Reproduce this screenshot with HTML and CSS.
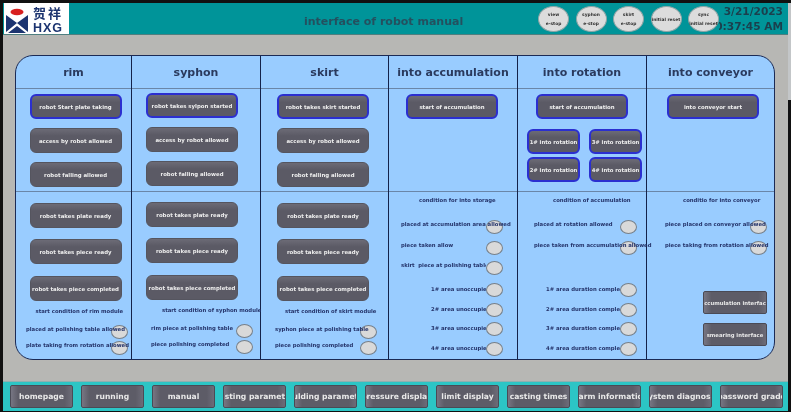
FILE: index.html
```html
<!DOCTYPE html>
<html lang="en">
<head>
<meta charset="utf-8">
<title>interface of robot manual</title>
<link rel="stylesheet" href="styles.css">
</head>
<body>
<div class="frame">
  <header class="topbar">
    <div class="logo">
      <svg class="logo-mark" width="24" height="27" viewBox="0 0 24 27">
        <ellipse cx="12" cy="6" rx="6.5" ry="3.2" fill="#d8201f"/>
        <path d="M1 9 L12 17 L1 26 Z M23 9 L12 17 L23 26 Z M3 27 L12 20 L21 27 Z" fill="#1c3470"/>
      </svg>
      <div class="logo-text">
        <span class="logo-cn">贺祥</span>
        <span class="logo-en">HXG</span>
      </div>
    </div>
    <h1 class="title">interface of robot manual</h1>
    <div class="stops">
      <div class="stop"><span>view</span><span>e-stop</span></div>
      <div class="stop"><span>syphon</span><span>e-stop</span></div>
      <div class="stop"><span>skirt</span><span>e-stop</span></div>
      <div class="stop"><span>initial reset</span></div>
      <div class="stop"><span>sync</span><span>initial reset</span></div>
    </div>
    <div class="clock">
      <span>3/21/2023</span>
      <span>10:37:45 AM</span>
    </div>
  </header>

  <main class="stage">
    <section class="panel">
      <div class="col col-rim">
        <h2 class="col-head">rim</h2>
        <div class="col-top">
          <button class="btn btn-on">robot Start plate taking</button>
          <button class="btn">access by robot allowed</button>
          <button class="btn">robot falling allowed</button>
        </div>
        <div class="col-low">
          <button class="btn">robot takes plate ready</button>
          <button class="btn btn-mid">robot takes piece ready</button>
          <button class="btn btn-last">robot takes piece completed</button>
          <p class="cond-head">start condition of rim module</p>
          <div class="cond cond-first"><span class="label over">placed at polishing table allowed</span><i class="lamp"></i></div>
          <div class="cond"><span class="label over">plate taking from rotation allowed</span><i class="lamp"></i></div>
        </div>
      </div>

      <div class="col col-syphon">
        <h2 class="col-head">syphon</h2>
        <div class="col-top">
          <button class="btn btn-on">robot takes sylpon started</button>
          <button class="btn">access by robot allowed</button>
          <button class="btn">robot falling allowed</button>
        </div>
        <div class="col-low">
          <button class="btn">robot takes plate ready</button>
          <button class="btn btn-mid">robot takes piece ready</button>
          <button class="btn btn-last">robot takes piece completed</button>
          <p class="cond-head">start condition of syphon module</p>
          <div class="cond cond-first"><span class="label">rim piece at polishing table</span><i class="lamp"></i></div>
          <div class="cond"><span class="label">piece polishing completed</span><i class="lamp"></i></div>
        </div>
      </div>

      <div class="col col-skirt">
        <h2 class="col-head">skirt</h2>
        <div class="col-top">
          <button class="btn btn-on">robot takes skirt started</button>
          <button class="btn">access by robot allowed</button>
          <button class="btn">robot falling allowed</button>
        </div>
        <div class="col-low">
          <button class="btn">robot takes plate ready</button>
          <button class="btn btn-mid">robot takes piece ready</button>
          <button class="btn btn-last">robot takes piece completed</button>
          <p class="cond-head">start condition of skirt module</p>
          <div class="cond cond-first"><span class="label over">syphon piece at polishing table</span><i class="lamp"></i></div>
          <div class="cond"><span class="label">piece polishing completed</span><i class="lamp"></i></div>
        </div>
      </div>

      <div class="col col-accum">
        <h2 class="col-head">into accumulation</h2>
        <div class="col-top">
          <button class="btn btn-on">start of accumulation</button>
        </div>
        <div class="col-low">
          <p class="cond-head">condition for into storage</p>
          <div class="cond cond-a"><span class="label over">placed at accumulation area allowed</span><i class="lamp"></i></div>
          <div class="cond cond-b"><span class="label">piece taken allow</span><i class="lamp"></i></div>
          <div class="cond cond-c"><span class="label clip">skirt&nbsp; piece at polishing table</span><i class="lamp"></i></div>
          <div class="cond cond-n1"><span class="label clip num">1# area unoccupied</span><i class="lamp"></i></div>
          <div class="cond cond-n"><span class="label clip num">2# area unoccupied</span><i class="lamp"></i></div>
          <div class="cond cond-n"><span class="label clip num">3# area unoccupied</span><i class="lamp"></i></div>
          <div class="cond cond-n"><span class="label clip num">4# area unoccupied</span><i class="lamp"></i></div>
        </div>
      </div>

      <div class="col col-rot">
        <h2 class="col-head">into rotation</h2>
        <div class="col-top">
          <button class="btn btn-on">start of accumulation</button>
          <div class="minis">
            <button class="btn btn-on mini">1# into rotation</button>
            <button class="btn btn-on mini">3# into rotation</button>
            <button class="btn btn-on mini">2# into rotation</button>
            <button class="btn btn-on mini">4# into rotation</button>
          </div>
        </div>
        <div class="col-low">
          <p class="cond-head">condition of accumulation</p>
          <div class="cond cond-a"><span class="label">placed at rotation allowed</span><i class="lamp"></i></div>
          <div class="cond cond-b"><span class="label over">piece taken from accumulation allowed</span><i class="lamp"></i></div>
          <div class="cond cond-n1 cond-gap"><span class="label clip num">1# area duration completed</span><i class="lamp"></i></div>
          <div class="cond cond-n"><span class="label clip num">2# area duration completed</span><i class="lamp"></i></div>
          <div class="cond cond-n"><span class="label clip num">3# area duration completed</span><i class="lamp"></i></div>
          <div class="cond cond-n"><span class="label clip num">4# area duration completed</span><i class="lamp"></i></div>
        </div>
      </div>

      <div class="col col-conv">
        <h2 class="col-head">into conveyor</h2>
        <div class="col-top">
          <button class="btn btn-on">into conveyor start</button>
        </div>
        <div class="col-low">
          <p class="cond-head">conditio for into conveyor</p>
          <div class="cond cond-a"><span class="label over">piece placed on conveyor allowed</span><i class="lamp"></i></div>
          <div class="cond cond-b"><span class="label over">piece taking from rotation allowed</span><i class="lamp"></i></div>
          <div class="links">
            <button class="nav link"><span>accumulation interface</span></button>
            <button class="nav link"><span>smearing interface</span></button>
          </div>
        </div>
      </div>
    </section>
  </main>

  <nav class="footer">
    <button class="nav"><span>homepage</span></button>
    <button class="nav"><span>running</span></button>
    <button class="nav"><span>manual</span></button>
    <button class="nav"><span>casting parameter</span></button>
    <button class="nav"><span>moulding parameters</span></button>
    <button class="nav"><span>pressure display</span></button>
    <button class="nav"><span>limit display</span></button>
    <button class="nav"><span>casting times</span></button>
    <button class="nav"><span>alarm information</span></button>
    <button class="nav"><span>system diagnosis</span></button>
    <button class="nav"><span>password grade</span></button>
  </nav>
  <div class="edge-light"></div>
</div>
</body>
</html>
```
FILE: styles.css
```css
* { box-sizing: border-box; }
html, body { margin: 0; padding: 0; background: #fff; }
body { width: 791px; height: 416px; overflow: hidden; font-family: "DejaVu Sans", sans-serif; }

.frame {
  position: relative;
  width: 791px;
  height: 412px;
  border: 3px solid #111;
  border-bottom-width: 1px;
  display: flex;
  flex-direction: column;
  background: #b7b7b4;
  filter: blur(0.35px);
}
.edge-light {
  position: absolute;
  top: 0;
  right: -3px;
  width: 3px;
  height: 97px;
  background: #c3c6c8;
}

/* header */
.topbar {
  height: 32px;
  flex: none;
  display: flex;
  align-items: center;
  background: #009499;
  border-bottom: 1px solid #4f7f80;
}
.logo {
  width: 65px;
  height: 31px;
  margin-left: 1px;
  flex: none;
  background: #fff;
  display: flex;
  align-items: flex-start;
  padding: 3px 0 0 1px;
  gap: 4px;
}
.logo-text { display: flex; flex-direction: column; color: #1c3470; line-height: 1; }
.logo-cn { font-family: "Noto Sans CJK SC", sans-serif; font-weight: 700; font-size: 13px; letter-spacing: 2px; height: 15px; }
.logo-en { font-family: "Liberation Sans", sans-serif; font-weight: 700; font-size: 12.5px; letter-spacing: 1px; margin-top: 1px; }

.title {
  margin: 5px 0 0 235px;
  width: 160px;
  flex: none;
  white-space: nowrap;
  font-size: 11px;
  font-weight: 700;
  color: #24505f;
}
.stops { margin-left: 74px; display: flex; gap: 6.5px; flex: none; }
.stop {
  width: 31px;
  height: 26px;
  margin-top: 1px;
  border-radius: 50%;
  background: #dcdcdc;
  border: 1px solid #8fa5a6;
  display: flex;
  flex-direction: column;
  align-items: center;
  justify-content: center;
  gap: 4px;
  font-size: 4.4px;
  font-weight: 700;
  color: #333;
  white-space: nowrap;
}
.clock {
  width: 64px;
  flex: none;
  overflow: hidden;
  display: flex;
  flex-direction: column;
  align-items: flex-end;
  font-size: 10.6px;
  line-height: 15px;
  color: #1b3f4d;
  white-space: nowrap;
  font-weight: 700;
}

/* main */
.stage { flex: 1; padding: 20px 0 20px 12px; min-height: 0; }
.panel {
  width: 760px;
  height: 305px;
  display: grid;
  grid-template-columns: 116px 129px 128px 129px 129px 1fr;
  background: #99ccff;
  border: 1.5px solid #1b2a55;
  border-radius: 18px;
}
.col { border-right: 1.5px solid #14224a; display: flex; flex-direction: column; min-width: 0; }
.col:last-child { border-right: 0; }
.col-head {
  margin: 0;
  height: 33px;
  flex: none;
  display: flex;
  align-items: center;
  justify-content: center;
  font-size: 11px;
  color: #2a3a5e;
  border-bottom: 1px solid #6a86a8;
  white-space: nowrap;
}
.col-top {
  height: 103px;
  flex: none;
  border-bottom: 1px solid #6a86a8;
  display: flex;
  flex-direction: column;
  align-items: flex-start;
  gap: 9px;
  padding-top: 5px;
}
.col-low { display: flex; flex-direction: column; align-items: flex-start; padding-top: 11px; flex: 1; min-height: 0; }

.col-rim .col-top, .col-rim .col-low { padding-left: 13.5px; }
.col-syphon .col-top, .col-syphon .col-low { padding-left: 14px; }
.col-skirt .col-top, .col-skirt .col-low { padding-left: 16px; }
.col-accum .col-top { padding-left: 17px; }
.col-rot .col-top { padding-left: 18px; }
.col-conv .col-top { padding-left: 20px; }
.col-syphon .col-top { padding-top: 4px; }
.col-syphon .col-low { padding-top: 10px; }

.btn {
  width: 92px;
  height: 25px;
  flex: none;
  padding: 0;
  border: 1px solid #55555f;
  border-radius: 6px;
  background: linear-gradient(#6c6b76, #5b5a65 30%, #5b5a65);
  color: #eeeeee;
  font: 700 5.4px "DejaVu Sans", sans-serif;
  white-space: nowrap;
  display: flex;
  align-items: center;
  justify-content: center;
}
.btn-on { border: 2px solid #2b2fd0; }
.btn-mid { margin-top: 11px; }
.btn-last { margin-top: 12px; }

.minis {
  display: grid;
  grid-template-columns: 53px 53px;
  column-gap: 9px;
  row-gap: 3px;
  margin-left: -9px;
  margin-top: 1px;
}
.mini { width: 53px; height: 25px; font-size: 5.3px; border-radius: 6px; overflow: hidden; }

.cond-head {
  margin: 7px 0 0;
  height: 7px;
  font-size: 5.3px;
  line-height: 7px;
  font-weight: 700;
  color: #24336a;
  white-space: nowrap;
}
.col-rim .cond-head { padding-left: 6px; }
.col-syphon .cond-head { padding-left: 16px; }
.col-skirt .cond-head { padding-left: 8px; }
.col-accum .col-low, .col-rot .col-low, .col-conv .col-low { padding-top: 5px; }
.col-accum .cond-head { margin: 0 0 0 30px; }
.col-rot .cond-head { margin: 0 0 0 35px; }
.col-conv .cond-head { margin: 0 0 0 36px; }

.cond { display: flex; align-items: flex-start; flex: none; height: 14px; margin-top: 2px; }
.cond-first { margin-top: 10px; }
.col-rim .cond { margin-left: -3.5px; width: 102px; }
.col-syphon .cond { margin-left: 5px; width: 102px; }
.col-skirt .cond { margin-left: -2px; width: 102px; }
.col-accum .cond { margin-left: 12px; width: 102px; }
.col-rot .cond { margin-left: 16px; width: 103px; }
.col-conv .cond { margin-left: 18px; width: 102px; }
.col-low .cond-a { margin-top: 16px; }
.col-low .cond-b { margin-top: 7px; }
.col-low .cond-c { margin-top: 6px; }
.col-low .cond-n1 { margin-top: 8px; }
.col-low .cond-gap { margin-top: 28px; }
.col-low .cond-n { margin-top: 5.5px; }

.label {
  flex: 1;
  min-width: 0;
  position: relative;
  z-index: 1;
  font-size: 5.3px;
  line-height: 7px;
  padding-top: 1px;
  font-weight: 700;
  color: #24336a;
  white-space: nowrap;
}
.label.clip { overflow: hidden; z-index: 0; }
.label.num { padding-left: 30px; padding-top: 3px; }
.col-rot .label.num { padding-left: 12px; }

.lamp {
  flex: none;
  width: 17px;
  height: 14px;
  border-radius: 50%;
  background: #d9d9d9;
  border: 1px solid #77808a;
}

/* nav buttons */
.nav {
  width: 63px;
  height: 23px;
  flex: none;
  padding: 0;
  border: 1px solid #4a4a55;
  border-radius: 2px;
  background: linear-gradient(90deg, #777683, #5d5c67 12%, #5d5c67 88%, #6d6c78);
  color: #e8e8e8;
  font: 700 7.6px "DejaVu Sans", sans-serif;
  white-space: nowrap;
  overflow: hidden;
  display: flex;
  align-items: center;
  justify-content: center;
}
.nav span { flex: none; }

.links {
  display: flex;
  flex-direction: column;
  gap: 9px;
  margin: 36px 0 0 56px;
}
.nav.link { height: 23px; width: 64px; font-size: 5.3px; }

.footer {
  height: 30px;
  flex: none;
  display: flex;
  align-items: center;
  gap: 8px;
  padding: 0 0 0 7px;
  background: #2cc5c5;
  border-top: 1px solid #8fb0b0;
}
```
